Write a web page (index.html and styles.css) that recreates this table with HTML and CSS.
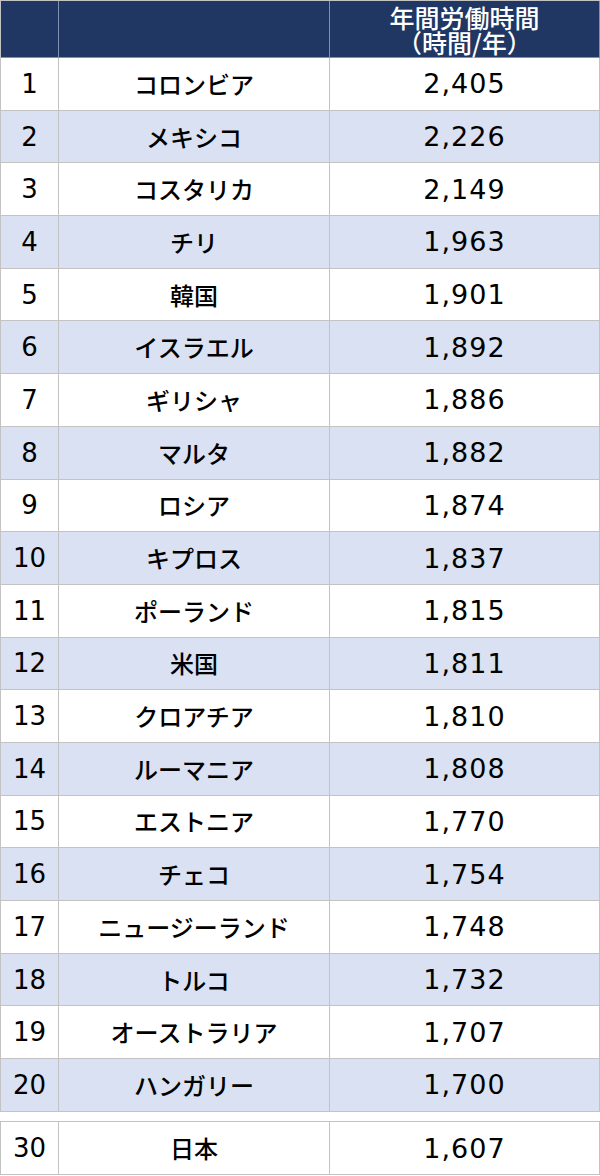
FILE: index.html
```html
<!DOCTYPE html>
<html lang="ja">
<head>
<meta charset="utf-8">
<link rel="stylesheet" href="styles.css">
</head>
<body>
<div class="table">
  <div class="row head">
    <div class="cell"></div>
    <div class="cell"></div>
    <div class="cell title"><p class="title-text">年間労働時間<br>（時間/年）</p></div>
  </div>
  <div class="row"><div class="cell num">1</div><div class="cell">コロンビア</div><div class="cell num val">2,405</div></div>
  <div class="row alt"><div class="cell num">2</div><div class="cell">メキシコ</div><div class="cell num val">2,226</div></div>
  <div class="row"><div class="cell num">3</div><div class="cell">コスタリカ</div><div class="cell num val">2,149</div></div>
  <div class="row alt"><div class="cell num">4</div><div class="cell">チリ</div><div class="cell num val">1,963</div></div>
  <div class="row"><div class="cell num">5</div><div class="cell">韓国</div><div class="cell num val">1,901</div></div>
  <div class="row alt"><div class="cell num">6</div><div class="cell">イスラエル</div><div class="cell num val">1,892</div></div>
  <div class="row"><div class="cell num">7</div><div class="cell">ギリシャ</div><div class="cell num val">1,886</div></div>
  <div class="row alt"><div class="cell num">8</div><div class="cell">マルタ</div><div class="cell num val">1,882</div></div>
  <div class="row"><div class="cell num">9</div><div class="cell">ロシア</div><div class="cell num val">1,874</div></div>
  <div class="row alt"><div class="cell num">10</div><div class="cell">キプロス</div><div class="cell num val">1,837</div></div>
  <div class="row"><div class="cell num">11</div><div class="cell">ポーランド</div><div class="cell num val">1,815</div></div>
  <div class="row alt"><div class="cell num">12</div><div class="cell">米国</div><div class="cell num val">1,811</div></div>
  <div class="row"><div class="cell num">13</div><div class="cell">クロアチア</div><div class="cell num val">1,810</div></div>
  <div class="row alt"><div class="cell num">14</div><div class="cell">ルーマニア</div><div class="cell num val">1,808</div></div>
  <div class="row"><div class="cell num">15</div><div class="cell">エストニア</div><div class="cell num val">1,770</div></div>
  <div class="row alt"><div class="cell num">16</div><div class="cell">チェコ</div><div class="cell num val">1,754</div></div>
  <div class="row"><div class="cell num">17</div><div class="cell">ニュージーランド</div><div class="cell num val">1,748</div></div>
  <div class="row alt"><div class="cell num">18</div><div class="cell">トルコ</div><div class="cell num val">1,732</div></div>
  <div class="row"><div class="cell num">19</div><div class="cell">オーストラリア</div><div class="cell num val">1,707</div></div>
  <div class="row alt"><div class="cell num">20</div><div class="cell">ハンガリー</div><div class="cell num val">1,700</div></div>
</div>
<div class="table second">
  <div class="row"><div class="cell num">30</div><div class="cell">日本</div><div class="cell num val">1,607</div></div>
</div>
</body>
</html>
```
FILE: styles.css
```css
html, body {
  margin: 0;
  padding: 0;
  background: #ffffff;
}
body {
  width: 600px;
  font-family: "Noto Sans CJK JP", "Noto Sans", sans-serif;
  color: #000;
}
.table {
  display: flex;
  flex-direction: column;
  border-left: 1px solid #c3c3c3;
  border-top: 1px solid #c3c3c3;
  box-sizing: border-box;
  width: 600px;
}
.second {
  margin-top: 9.6px;
}
.row {
  display: grid;
  grid-template-columns: 58px 271px 1fr;
  height: 52.7px;
  box-sizing: border-box;
}
.row.alt {
  background: #d9e1f2;
}
.cell {
  display: flex;
  align-items: center;
  justify-content: center;
  border-right: 1px solid #c3c3c3;
  border-bottom: 1px solid #c3c3c3;
  font-size: 24px;
  font-weight: 500;
  line-height: 1;
}
.cell.num {
  font-family: "DejaVu Sans", "Noto Sans", sans-serif;
  font-size: 26px;
}
.cell.val {
  font-size: 27px;
  letter-spacing: 1px;
}
.row.head {
  height: 57px;
  background: #203764;
}
.row.head .cell {
  border-right-color: #8090b0;
  border-bottom-color: #8090b0;
}
.title {
  align-items: flex-start;
}
.title-text {
  margin: 0;
  padding-top: 4px;
  text-align: center;
  color: #ffffff;
  font-size: 25px;
  line-height: 25px;
}
```
